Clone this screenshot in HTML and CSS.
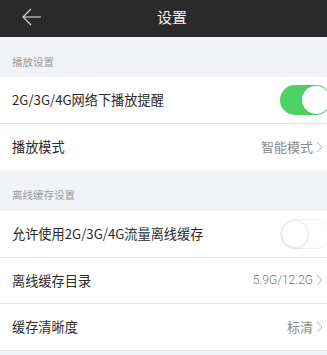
FILE: index.html
```html
<!DOCTYPE html>
<html lang="zh-CN">
<head>
<meta charset="utf-8">
<title>设置</title>
<link rel="stylesheet" href="styles.css">
</head>
<body>
<div class="page">
  <header class="topbar">
    <svg class="back" width="20" height="18" viewBox="0 0 20 18"><polyline points="9,1 1,9 9,17" fill="none" stroke="#d8d8d8" stroke-width="1.1"/><line x1="1" y1="9" x2="19" y2="9" stroke="#d8d8d8" stroke-width="1.1"/></svg>
    <h1 class="title">设置</h1>
  </header>

  <div class="section">播放设置</div>
  <div class="row">
    <span class="label">2G/3G/4G网络下播放提醒</span>
    <span class="switch on"><span class="knob"></span></span>
  </div>
  <div class="row last">
    <span class="label">播放模式</span>
    <span class="value">智能模式<svg class="chev" width="7" height="12" viewBox="0 0 7 12"><polyline points="1,1 6,6 1,11" fill="none" stroke="#b5b5b5" stroke-width="1"/></svg></span>
  </div>

  <div class="section second">离线缓存设置</div>
  <div class="row">
    <span class="label">允许使用2G/3G/4G流量离线缓存</span>
    <span class="switch off"><span class="knob"></span></span>
  </div>
  <div class="row">
    <span class="label">离线缓存目录</span>
    <span class="value num">5.9G/12.2G<svg class="chev" width="7" height="12" viewBox="0 0 7 12"><polyline points="1,1 6,6 1,11" fill="none" stroke="#b5b5b5" stroke-width="1"/></svg></span>
  </div>
  <div class="row">
    <span class="label">缓存清晰度</span>
    <span class="value">标清<svg class="chev" width="7" height="12" viewBox="0 0 7 12"><polyline points="1,1 6,6 1,11" fill="none" stroke="#b5b5b5" stroke-width="1"/></svg></span>
  </div>
  <div class="rest"></div>
</div>
</body>
</html>
```
FILE: styles.css
```css
html, body {
  margin: 0;
  padding: 0;
  background: #f2f3f7;
}
.page {
  width: 327px;
  height: 355px;
  overflow: hidden;
  font-family: "Noto Sans CJK SC", "Noto Sans", sans-serif;
  background: #f2f3f7;
}
.topbar {
  height: 37px;
  background: #2a2a2a;
  display: flex;
  align-items: center;
  padding: 0 0 4px 22px;
  box-sizing: border-box;
}
.back {
  display: block;
}
.title {
  margin: 0 0 0 115px;
  font-size: 15px;
  font-weight: normal;
  color: #f0f0f0;
  line-height: 20px;
}
.section {
  height: 40px;
  box-sizing: border-box;
  display: flex;
  align-items: flex-end;
  padding: 0 0 8px 12px;
  font-size: 10.5px;
  line-height: 15px;
  color: #9a9a9a;
}
.section.second {
  height: 41px;
  padding-bottom: 9px;
}
.row {
  height: 46.5px;
  box-sizing: border-box;
  background: #fff;
  display: flex;
  align-items: center;
  justify-content: space-between;
  padding: 0 4px 0 12px;
  border-bottom: 1px solid #e6e6e8;
}
.row.last {
  border-bottom: none;
}
.label {
  font-size: 13.2px;
  color: #2a2a2a;
}
.value {
  display: flex;
  align-items: center;
  gap: 3px;
  font-size: 13px;
  color: #8a8a8a;
}
.value.num {
  font-family: Roboto, "Noto Sans", sans-serif;
  font-weight: 300;
  font-size: 12px;
  color: #777;
}
.chev {
  display: block;
}
.switch {
  width: 51px;
  height: 30px;
  border-radius: 15px;
  box-sizing: border-box;
  display: flex;
  align-items: center;
  margin-right: -8px;
  flex-shrink: 0;
}
.switch.on {
  background: #4ed164;
  justify-content: flex-end;
  padding-right: 1px;
}
.switch.off {
  background: #fff;
  border: 1px solid #ececec;
  justify-content: flex-start;
}
.knob {
  width: 28px;
  height: 28px;
  border-radius: 50%;
  background: #fff;
  box-sizing: border-box;
}
.switch.on .knob {
  box-shadow: 0 1px 2px rgba(0,0,0,0.15);
}
.switch.off .knob {
  border: 1px solid #e6e6e6;
  box-shadow: 0 1px 2px rgba(0,0,0,0.06);
}
.rest {
  height: 10px;
}
```
